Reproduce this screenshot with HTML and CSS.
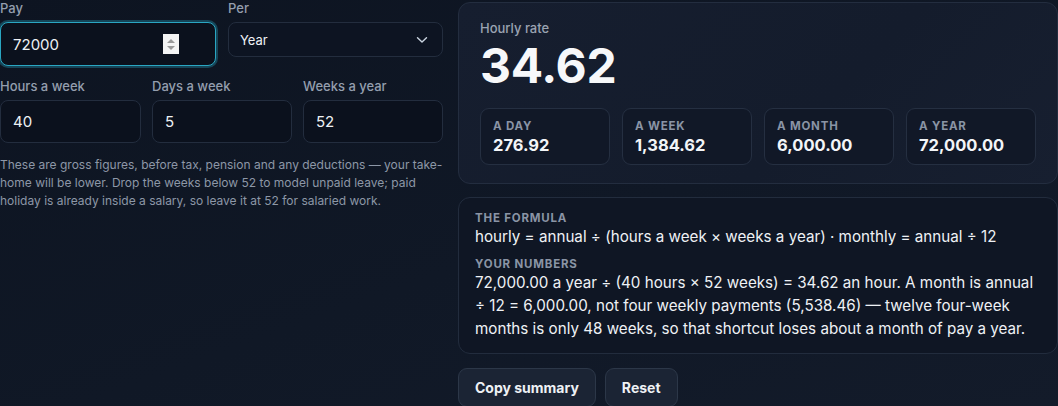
FILE: index.html
```html
<!DOCTYPE html>
<html lang="en">
<head>
<meta charset="utf-8">
<title>Hourly rate calculator</title>
<link rel="stylesheet" href="styles.css">
</head>
<body>
<main class="app">
  <section class="inputs">
    <div class="row row-top">
      <label class="field">
        <span class="label">Pay</span>
        <span class="input focus">
          <span class="value">72000</span>
          <span class="spin"><span class="up"></span><span class="down"></span></span>
        </span>
      </label>
      <label class="field">
        <span class="label">Per</span>
        <span class="select">
          <span class="value small">Year</span>
          <svg class="chev" width="12" height="8" viewBox="0 0 12 8"><path d="M1.5 1.8 L6 6 L10.5 1.8" fill="none" stroke="#cbd5e1" stroke-width="1.4" stroke-linecap="round" stroke-linejoin="round"/></svg>
        </span>
      </label>
    </div>
    <div class="row row-three">
      <label class="field">
        <span class="label">Hours a week</span>
        <span class="input"><span class="value">40</span></span>
      </label>
      <label class="field">
        <span class="label">Days a week</span>
        <span class="input"><span class="value">5</span></span>
      </label>
      <label class="field">
        <span class="label">Weeks a year</span>
        <span class="input"><span class="value">52</span></span>
      </label>
    </div>
    <p class="note">These are gross figures, before tax, pension and any deductions — your take-home will be lower. Drop the weeks below 52 to model unpaid leave; paid holiday is already inside a salary, so leave it at 52 for salaried work.</p>
  </section>

  <section class="results">
    <div class="panel">
      <div class="label">Hourly rate</div>
      <div class="big">34.62</div>
      <div class="tiles">
        <div class="tile"><div class="tile-label">A day</div><div class="tile-value">276.92</div></div>
        <div class="tile"><div class="tile-label">A week</div><div class="tile-value">1,384.62</div></div>
        <div class="tile"><div class="tile-label">A month</div><div class="tile-value">6,000.00</div></div>
        <div class="tile"><div class="tile-label">A year</div><div class="tile-value">72,000.00</div></div>
      </div>
    </div>
    <div class="formula">
      <div class="tile-label">The formula</div>
      <div class="formula-line">hourly = annual ÷ (hours a week × weeks a year) · monthly = annual ÷ 12</div>
      <div class="tile-label second">Your numbers</div>
      <p class="formula-text">72,000.00 a year ÷ (40 hours × 52 weeks) = 34.62 an hour. A month is annual ÷ 12 = 6,000.00, not four weekly payments (5,538.46) — twelve four-week months is only 48 weeks, so that shortcut loses about a month of pay a year.</p>
    </div>
    <div class="actions">
      <button class="btn">Copy summary</button>
      <button class="btn">Reset</button>
    </div>
  </section>
</main>
</body>
</html>
```
FILE: styles.css
```css
* { box-sizing: border-box; }
html, body { height: 100%; }
body {
  margin: 0;
  background: linear-gradient(160deg, #0d1421 0%, #101826 55%, #131b2a 100%);
  color: #e5e9f0;
  font-family: Inter, "Noto Sans", sans-serif;
  overflow: hidden;
}
.app {
  display: grid;
  grid-template-columns: 443px 600px;
  column-gap: 15px;
  align-items: start;
}
.inputs { display: flex; flex-direction: column; }
.row { display: grid; column-gap: 12px; }
.row-top { grid-template-columns: 216px 215px; }
.row-three { grid-template-columns: 141px 140px 140px; column-gap: 11px; margin-top: 12px; }
.field { display: flex; flex-direction: column; }
.label {
  font-size: 13px;
  line-height: 17px;
  color: #949eae;
  font-weight: 500;
  margin-bottom: 5px;
}
.input, .select {
  position: relative;
  display: flex;
  align-items: center;
  background: #0b111d;
  border: 1px solid #232d3e;
  border-radius: 8px;
  padding: 0 12px;
}
.input { height: 43px; }
.input.focus {
  height: 44px;
  border: 1px solid #2aa6c2;
  box-shadow: 0 0 0 2px rgba(38, 160, 190, 0.35);
}
.select { height: 35px; background: #0d1422; justify-content: space-between; padding-left: 11px; }
.value { font-size: 15px; color: #eef1f5; }
.value.small { font-size: 13px; }
.chev { margin-right: 2px; }
.spin {
  position: absolute;
  left: 162px;
  top: 11px;
  width: 16px;
  height: 20px;
  background: #f4f4f4;
  display: flex;
  flex-direction: column;
  align-items: center;
  justify-content: center;
  gap: 3px;
}
.spin .up, .spin .down { width: 0; height: 0; border-left: 4px solid transparent; border-right: 4px solid transparent; }
.spin .up { border-bottom: 4px solid #9a9a9a; }
.spin .down { border-top: 4px solid #9a9a9a; }
.note {
  margin: 13px 0 0;
  font-size: 12px;
  line-height: 18px;
  color: #8d97a7;
}
.results { display: flex; flex-direction: column; margin-top: 2px; }
.panel {
  background: linear-gradient(135deg, #161e2f 0%, #141c2c 60%, #171f30 100%);
  border: 1px solid #232d3f;
  border-radius: 12px;
  padding: 17px 21px 18px;
  height: 182px;
}
.panel .label { margin: 0; color: #9aa3b2; }
.big {
  font-size: 48px;
  font-weight: 700;
  line-height: 56px;
  color: #f7f8fa;
  letter-spacing: -0.3px;
  margin-top: 1px;
}
.tiles {
  display: grid;
  grid-template-columns: repeat(4, 130px);
  column-gap: 12px;
  margin-top: 14px;
}
.tile {
  height: 57px;
  border: 1px solid #252f41;
  border-radius: 9px;
  background: #111827;
  padding: 10px 12px;
}
.tile-label {
  font-size: 11.5px;
  font-weight: 700;
  letter-spacing: 0.07em;
  text-transform: uppercase;
  color: #8a94a5;
  line-height: 14px;
}
.tile-value {
  font-size: 16.5px;
  font-weight: 700;
  color: #f3f5f8;
  line-height: 22px;
  margin-top: 1px;
}
.formula {
  margin-top: 13px;
  border: 1px solid #222c3d;
  border-radius: 12px;
  background: #0f1624;
  padding: 13px 16px 14px;
  height: 157px;
}
.formula-line { font-size: 15.2px; line-height: 22px; color: #eef1f5; margin-top: 1px; }
.tile-label.second { margin-top: 9px; }
.formula-text { margin: 0; font-size: 15.2px; line-height: 23px; color: #eef1f5; }
.actions { display: flex; gap: 9px; margin-top: 14px; }
.btn {
  font-family: inherit;
  font-size: 14px;
  font-weight: 700;
  color: #eef1f5;
  background: #1b2434;
  border: 1px solid #2c3748;
  border-radius: 9px;
  padding: 0 16px;
  height: 39px;
}
```
